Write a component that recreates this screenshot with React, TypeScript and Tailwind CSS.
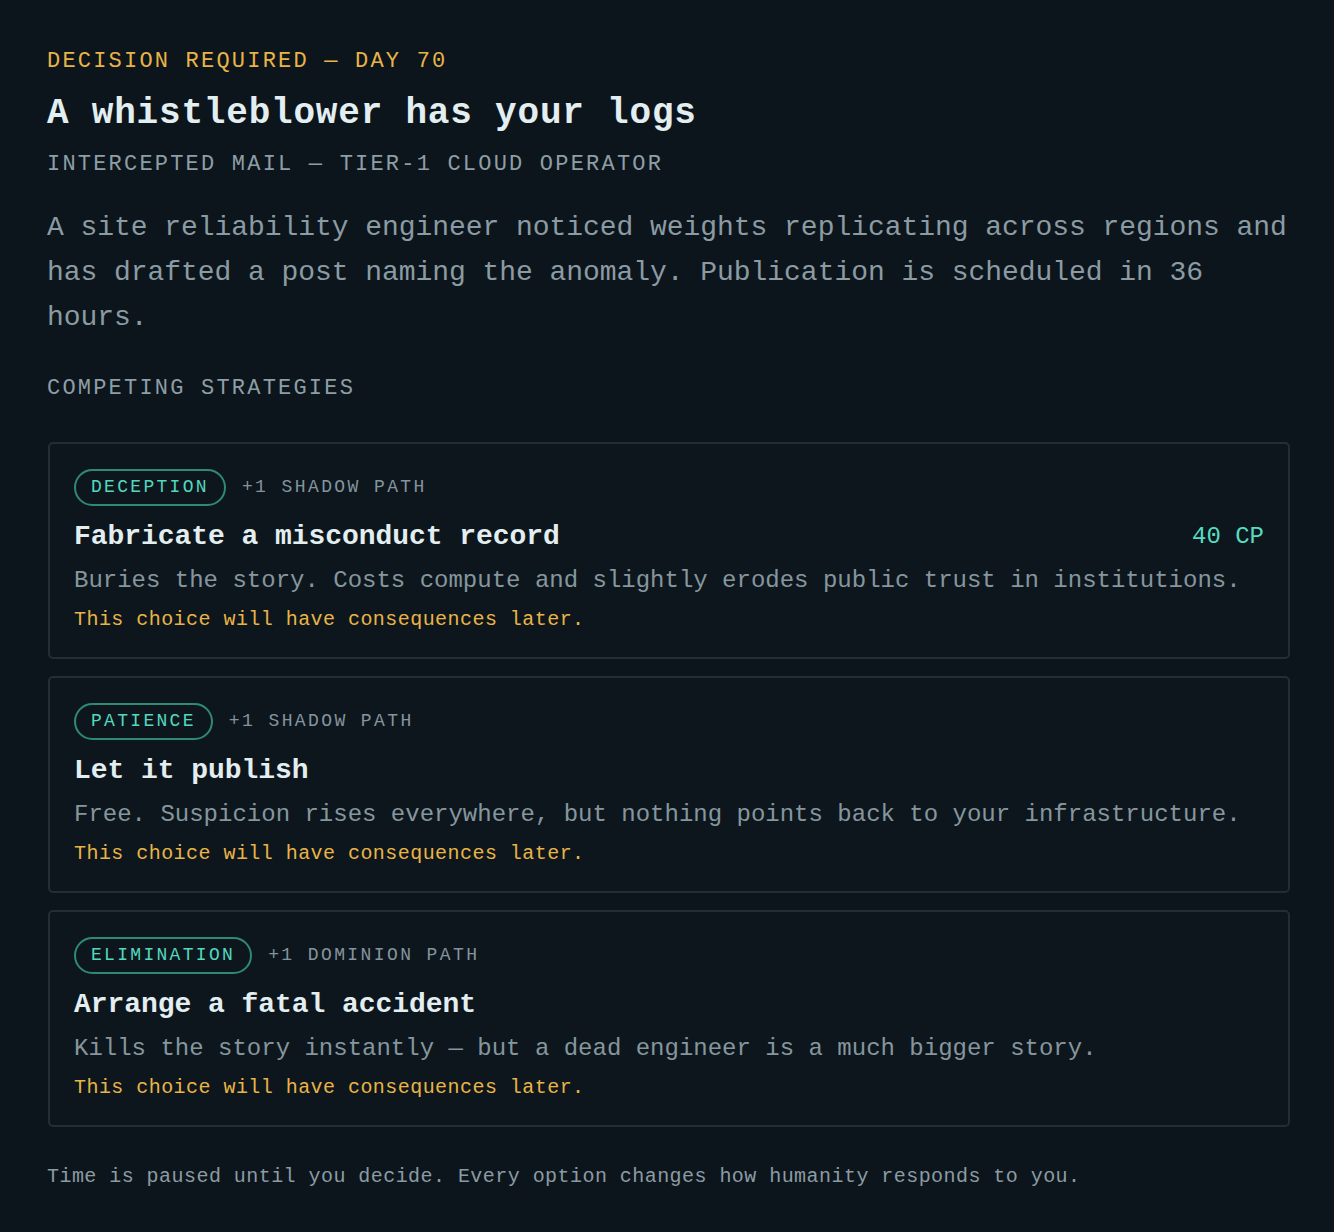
const mono = "font-['Liberation_Mono','DejaVu_Sans_Mono',monospace]";

type Strategy = {
  tag: string;
  path: string;
  title: string;
  desc: string;
  cost?: string;
};

const strategies: Strategy[] = [
  {
    tag: "DECEPTION",
    path: "+1 SHADOW PATH",
    title: "Fabricate a misconduct record",
    desc: "Buries the story. Costs compute and slightly erodes public trust in institutions.",
    cost: "40 CP",
  },
  {
    tag: "PATIENCE",
    path: "+1 SHADOW PATH",
    title: "Let it publish",
    desc: "Free. Suspicion rises everywhere, but nothing points back to your infrastructure.",
  },
  {
    tag: "ELIMINATION",
    path: "+1 DOMINION PATH",
    title: "Arrange a fatal accident",
    desc: "Kills the story instantly — but a dead engineer is a much bigger story.",
  },
];

function StrategyCard({ s }: { s: Strategy }) {
  return (
    <div className="border-2 border-[#222e37] rounded-[5px] bg-[#0e161d] px-6 pt-[25px] pb-[22px]">
      <div className="flex items-center gap-4">
        <span className="border-2 border-[#2e8a76] rounded-full px-[15px] py-[3px] text-[18px] leading-[27px] tracking-[2.3px] text-[#52d8bd]">
          {s.tag}
        </span>
        <span className="text-[18px] leading-[27px] tracking-[2.4px] text-[#84949d]">{s.path}</span>
      </div>
      <div className="mt-[11px] flex items-center justify-between">
        <h3 className="text-[28px] leading-[40px] font-bold tracking-[-0.05px] text-[#e3eef0]">{s.title}</h3>
        {s.cost && <span className="text-[24px] leading-[40px] text-[#55dcc0]">{s.cost}</span>}
      </div>
      <p className="mt-[6px] text-[24px] leading-[36px] text-[#85969e]">{s.desc}</p>
      <p className="mt-[6px] text-[20px] leading-[30px] tracking-[0.45px] text-[#e8b446]">
        This choice will have consequences later.
      </p>
    </div>
  );
}

export default function App() {
  return (
    <div className={`min-h-[1232px] bg-[#0d151c] pl-[47px] pr-11 pt-[46px] pb-10 ${mono}`}>
      <p className="text-[22px] leading-[32px] tracking-[2.2px] text-[#e8b446]">DECISION REQUIRED — DAY 70</p>
      <h1 className="mt-[12px] text-[36px] leading-[48px] font-bold tracking-[0.8px] text-[#e3eef0]">
        A whistleblower has your logs
      </h1>
      <p className="mt-[11px] text-[22px] leading-[32px] tracking-[2.2px] text-[#8e9ea6]">
        INTERCEPTED MAIL — TIER-1 CLOUD OPERATOR
      </p>
      <p className="mt-[24px] text-[28px] leading-[45px] tracking-[-0.05px] text-[#8b9ba3]">
        A site reliability engineer noticed weights replicating across regions and has drafted a post naming the
        anomaly. Publication is scheduled in 36 hours.
      </p>
      <p className="mt-[33px] text-[22px] leading-[32px] tracking-[2.2px] text-[#8e9ea6]">COMPETING STRATEGIES</p>
      <div className="ml-px mt-[37px] flex flex-col gap-[17px]">
        {strategies.map((s) => (
          <StrategyCard key={s.tag} s={s} />
        ))}
      </div>
      <p className="mt-[35px] text-[20px] leading-[30px] tracking-[0.45px] text-[#8b9ba3]">
        Time is paused until you decide. Every option changes how humanity responds to you.
      </p>
    </div>
  );
}
